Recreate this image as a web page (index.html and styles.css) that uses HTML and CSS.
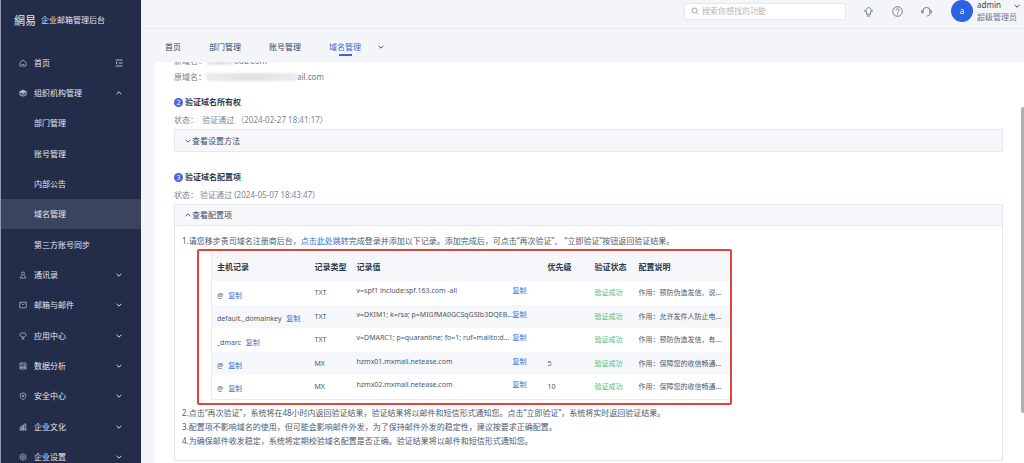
FILE: index.html
```html
<!DOCTYPE html>
<html lang="zh-CN">
<head>
<meta charset="utf-8">
<title>企业邮箱管理后台</title>
<link rel="stylesheet" href="styles.css">
</head>
<body>
<svg class="defs" aria-hidden="true">
  <symbol id="down" viewBox="0 0 10 10"><path d="M2 3.5 5 6.5 8 3.5"/></symbol>
  <symbol id="up" viewBox="0 0 10 10"><path d="M2 6.5 5 3.5 8 6.5"/></symbol>
</svg>
<div class="app">
  <aside class="sidebar">
    <div class="brand"><span class="logo">網易</span><span>企业邮箱管理后台</span></div>
    <nav class="nav">
      <div class="item"><svg class="icon" viewBox="0 0 16 16"><path d="M2 7 8 2l6 5v7H2zM5.500 11h5"/></svg><a href="#">首页</a><button class="fold" aria-label="收起菜单"><svg class="icon wide" viewBox="0 0 16 16"><path d="M1 2h14M7 8h8M1 14h14M4.500 5.500 2 8l2.500 2.500"/></svg></button></div>
      <button class="item"><svg class="icon" viewBox="0 0 16 16"><path d="M8 2l7 3.500-7 3.500-7-3.500z" class="fill"/><path d="M1.500 6v5c0 4 13 4 13 0V6M1.500 9c1 4 12 4 13 0"/></svg><span>组织机构管理</span><svg class="caret"><use href="#up"/></svg></button>
      <a class="item sub" href="#">部门管理</a>
      <a class="item sub" href="#">账号管理</a>
      <a class="item sub" href="#">内部公告</a>
      <a class="item sub active" href="#">域名管理</a>
      <a class="item sub" href="#">第三方账号同步</a>
      <button class="item"><svg class="icon" viewBox="0 0 16 16"><circle cx="8" cy="5" r="3"/><path d="M5.500 8.500 2 14h12l-3.500-5.500"/></svg><span>通讯录</span><svg class="caret"><use href="#down"/></svg></button>
      <button class="item"><svg class="icon" viewBox="0 0 16 16"><path d="M1.500 2.500h13v11h-13zM5 5.500c1.500 2 4.500 2 6 0"/></svg><span>邮箱与邮件</span><svg class="caret"><use href="#down"/></svg></button>
      <button class="item"><svg class="icon" viewBox="0 0 16 16"><path d="M4 2h8l2.500 3.500L11 10H5L1.500 5.500zM8 10v4M5 14h6"/></svg><span>应用中心</span><svg class="caret"><use href="#down"/></svg></button>
      <button class="item"><svg class="icon" viewBox="0 0 16 16"><path d="M2 2h12v12H2zM5 11V8M8 11V6M11 11V5M4 4.500h4M2 11.500h12"/></svg><span>数据分析</span><svg class="caret"><use href="#down"/></svg></button>
      <button class="item"><svg class="icon" viewBox="0 0 16 16"><path d="M8 1.500 13.500 4v5c0 3-3 5-5.500 6-2.500-1-5.500-3-5.500-6V4z"/><circle cx="8" cy="8" r="2"/></svg><span>安全中心</span><svg class="caret"><use href="#down"/></svg></button>
      <button class="item"><svg class="icon" viewBox="0 0 16 16"><path d="M1 14h14M2.500 14V8H6v6M6 14V5h3v9M10 14V2h3.500v12"/></svg><span>企业文化</span><svg class="caret"><use href="#down"/></svg></button>
      <button class="item"><svg class="icon" viewBox="0 0 16 16"><path d="M8 1.500 13.500 4.500v7L8 14.500l-5.500-3v-7z"/><circle cx="8" cy="8" r="2.500"/></svg><span>企业设置</span><svg class="caret"><use href="#down"/></svg></button>
    </nav>
  </aside>
  <div class="main">
    <header class="top">
      <label class="search"><svg class="icon" viewBox="0 0 16 16"><circle cx="7" cy="7" r="5"/><path d="m11 11 4 4"/></svg><input type="search" aria-label="搜索" placeholder="搜索你想找的功能"></label>
      <div class="tools">
        <button class="tool" aria-label="升级"><svg viewBox="0 0 16 16"><path d="M8 1.500 14 7.500h-3V12H5V7.500H2zM5.500 14.500h5"/></svg></button>
        <button class="tool" aria-label="帮助"><svg viewBox="0 0 16 16"><circle cx="8" cy="8" r="7"/><path d="M5.800 6.300c0-3 4.400-2.800 4.400 0C10.200 8 8 8 8 9.800M8 11v1.500"/></svg></button>
        <button class="tool" aria-label="客服"><svg viewBox="0 0 16 16"><path d="M3 10.500V7a5 5 0 0 1 10 0v4c0 2-2 3.500-4.500 3.500M3 6.500H1V10h2M13 6.500h2V10h-2"/></svg></button>
      </div>
      <div class="user">
        <span class="avatar">a</span>
        <div class="who"><span class="name">admin</span><span class="role">超级管理员</span></div>
        <svg class="caret"><use href="#down"/></svg>
      </div>
    </header>
    <nav class="tabs">
      <a href="#">首页</a><a href="#">部门管理</a><a href="#">账号管理</a><a class="current" href="#">域名管理</a>
      <button class="more" aria-label="更多"><svg class="caret"><use href="#down"/></svg></button>
    </nav>
    <main class="panel">
      <div class="content">
        <p class="domain">新域名：<span class="masked short"></span>oud.com</p>
        <p class="domain">原域名：<span class="masked"></span>ail.com</p>

        <section class="step">
          <h2><span class="num">2</span>验证域名所有权</h2>
          <p class="state">状态：&nbsp; 验证通过 （2024-02-27 18:41:17）</p>
          <div class="box"><button class="toggle"><svg class="caret"><use href="#down"/></svg>查看设置方法</button></div>
        </section>

        <section class="step">
          <h2><span class="num">3</span>验证域名配置项</h2>
          <p class="state">状态： 验证通过 (2024-05-07 18:43:47)</p>
          <div class="box">
            <button class="toggle open"><svg class="caret"><use href="#up"/></svg>查看配置项</button>
            <div class="body">
              <p>1.请您移步贵司域名注册商后台，<a href="#">点击此处跳转</a>完成登录并添加以下记录。添加完成后，可点击“再次验证”、 “立即验证”按钮返回验证结果。</p>
              <div class="frame">
                <table>
                  <colgroup><col class="c1"><col class="c2"><col class="c3"><col class="c4"><col class="c5"><col class="c6"><col></colgroup>
                  <thead><tr><th>主机记录</th><th>记录类型</th><th>记录值</th><th></th><th>优先级</th><th>验证状态</th><th>配置说明</th></tr></thead>
                  <tbody>
                    <tr><td class="host">@ <button>复制</button></td><td>TXT</td><td class="value">v=spf1 include:spf.163.com -all</td><td class="value"><button>复制</button></td><td></td><td class="ok">验证成功</td><td>作用：预防伪造发信。说...</td></tr>
                    <tr><td class="host">default._domainkey <button>复制</button></td><td>TXT</td><td class="value">v=DKIM1; k=rsa; p=MIGfMA0GCSqGSIb3DQEB...</td><td class="value"><button>复制</button></td><td></td><td class="ok">验证成功</td><td>作用：允许发件人防止电...</td></tr>
                    <tr><td class="host">_dmarc <button>复制</button></td><td>TXT</td><td class="value">v=DMARC1; p=quarantine; fo=1; ruf=mailto:d...</td><td class="value"><button>复制</button></td><td></td><td class="ok">验证成功</td><td>作用：预防伪造发信，有...</td></tr>
                    <tr><td class="host">@ <button>复制</button></td><td>MX</td><td class="value">hzmx01.mxmail.netease.com</td><td class="value"><button>复制</button></td><td>5</td><td class="ok">验证成功</td><td>作用：保障您的收信畅通...</td></tr>
                    <tr><td class="host">@ <button>复制</button></td><td>MX</td><td class="value">hzmx02.mxmail.netease.com</td><td class="value"><button>复制</button></td><td>10</td><td class="ok">验证成功</td><td>作用：保障您的收信畅通...</td></tr>
                  </tbody>
                </table>
              </div>
              <p>2.点击“再次验证”，系统将在48小时内返回验证结果，验证结果将以邮件和短信形式通知您。点击“立即验证”，系统将实时返回验证结果。</p>
              <p>3.配置项不影响域名的使用，但可能会影响邮件外发，为了保持邮件外发的稳定性，建议按要求正确配置。</p>
              <p>4.为确保邮件收发稳定，系统将定期校验域名配置是否正确。验证结果将以邮件和短信形式通知您。</p>
            </div>
          </div>
        </section>
      </div>
      <div class="scrollbar"></div>
    </main>
  </div>
</div>
</body>
</html>
```

FILE: styles.css
```css
* { box-sizing: border-box; }
body {
  margin: 0;
  font: 8px/14px "Noto Sans", "Noto Sans CJK SC", sans-serif;
  color: #50596a;
  background: #f4f5f8;
}
p, h2 { margin: 0; }
a { color: inherit; text-decoration: none; }
button {
  font: inherit;
  color: inherit;
  background: none;
  border: 0;
  padding: 0;
}
svg { fill: none; stroke: currentColor; }
.defs { display: none; }
.icon { width: 8px; height: 8px; stroke-width: 1.5; flex: none; }
.wide { stroke-width: 2; }
.fill { fill: currentColor; }
.caret { width: 8px; height: 8px; stroke-width: 1.2; flex: none; }

.app { display: flex; height: 100vh; overflow: hidden; }

.sidebar {
  flex: none;
  width: 141px;
  border-left: 1px solid #9299ab;
  background: #232c48;
  color: #e3e6ee;
  overflow: hidden;
}
.brand {
  display: flex;
  align-items: center;
  gap: 5px;
  height: 40px;
  margin-bottom: 8px;
  padding-left: 13px;
}
.logo { font: 11px/14px "Noto Sans CJK TC", sans-serif; }
.item {
  display: flex;
  align-items: center;
  gap: 7px;
  width: 100%;
  height: 30px;
  padding: 0 18px;
  text-align: left;
}
.item:nth-child(3n) { margin-bottom: 1px; }
.item .icon { color: #b4bacb; }
.item .caret, .fold { margin-left: auto; }
.fold { display: flex; }
.sub { padding-left: 33px; }
.active { background: #3a445d; }

.main { flex: 1; min-width: 0; display: flex; flex-direction: column; }
.top {
  display: flex;
  align-items: center;
  justify-content: flex-end;
  height: 29px;
  padding: 0 3px 6px 0;
  border-bottom: 1px solid #e9ebef;
}
.search {
  display: flex;
  align-items: center;
  gap: 3px;
  width: 162px;
  height: 17px;
  padding: 0 6px;
  background: #fff;
  border: 1px solid #e4e7ec;
  border-radius: 2px;
  color: #7d8594;
}
.search input {
  flex: 1;
  min-width: 0;
  border: 0;
  padding: 0;
  outline: 0;
  font: inherit;
  background: none;
}
.search input::placeholder { color: #b0b5be; }
.tools { display: flex; gap: 18px; margin: 0 19px 0 17px; color: #636e82; }
.tool { display: flex; }
.tool svg { width: 11px; height: 11px; stroke-width: 1.3; }
.user { display: flex; align-items: center; gap: 4px; }
.avatar {
  width: 22px;
  height: 22px;
  border-radius: 50%;
  background: #2d62e2;
  color: #fff;
  line-height: 22px;
  text-align: center;
}
.who { display: flex; flex-direction: column; line-height: 12px; }
.name { color: #39445a; }
.role { color: #6d7789; }
.user .caret { align-self: flex-start; margin-top: 3px; margin-left: -8px; color: #39445a; }

.tabs {
  display: flex;
  align-items: center;
  gap: 28px;
  height: 33px;
  padding: 3px 24px 0;
  color: #39445a;
}
.current {
  color: #3a67cf;
  background: linear-gradient(#3a67cf, #3a67cf) center bottom / 13px 2px no-repeat;
  padding: 2px 0;
}
.more { display: flex; margin-left: -12px; }

.panel {
  flex: 1;
  min-height: 0;
  display: flex;
  margin-left: 14px;
  background: #fff;
  overflow: hidden;
}
.content { flex: 1; min-width: 0; margin-top: -9px; padding-left: 19px; }
.domain { display: flex; align-items: center; height: 16px; color: #747b88; }
.masked {
  width: 91px;
  height: 8px;
  background: linear-gradient(90deg, #ececee, #e0e0e3, #ececee);
  filter: blur(1px);
}
.short { width: 28px; }
.step { padding-top: 9px; margin-bottom: 8px; }
.step h2 {
  display: flex;
  align-items: center;
  gap: 2px;
  height: 16px;
  margin-bottom: 2px;
  font-size: 8px;
  color: #303a4c;
}
.num {
  width: 9px;
  height: 9px;
  border-radius: 50%;
  background: #4766e0;
  color: #fff;
  font-size: 7px;
  font-weight: 400;
  line-height: 9px;
  text-align: center;
}
.state { height: 16px; line-height: 16px; color: #7e8592; margin-bottom: 1px; }
.box { border: 1px solid #e5e8ee; }
.toggle {
  display: flex;
  align-items: center;
  width: 100%;
  height: 21px;
  padding-left: 9px;
  background: #f5f7fa;
  color: #434c5d;
}
.open { border-bottom: 1px solid #e5e8ee; }
.body { padding: 8px 7px 12px; }
.body p a, td button { color: #3b6bd6; }
.frame {
  width: 535px;
  margin: 1px 0 1px 15px;
  padding: 1px 0 3px 12px;
  border: 2px solid #df4540;
  border-radius: 2px;
}
table {
  width: 100%;
  table-layout: fixed;
  border-collapse: collapse;
  border-left: 1px solid #e9ecf1;
  border-bottom: 1px solid #e9ecf1;
  font-size: 7px;
  line-height: 12px;
  white-space: nowrap;
}
th, td { padding: 0 0 0 5px; text-align: left; }
th { height: 29px; font-size: 8px; color: #303a4c; }
td { height: 24px; }
tbody tr:nth-child(even) td { height: 23px; }
thead, tbody tr:nth-child(even) { background: #f5f7fa; }
.host { padding-top: 5px; }
.host button { margin-left: 3px; }
.value { padding-bottom: 4px; }
td.ok { color: #4dbd85; }
.c1 { width: 98px; }
.c2 { width: 42px; }
.c3 { width: 156px; }
.c4 { width: 35px; }
.c5 { width: 47px; }
.c6 { width: 44px; }
.scrollbar {
  flex: none;
  width: 3px;
  height: 306px;
  margin: 45px 0 0 18px;
  border-radius: 2px 0 0 2px;
  background: #b0b0b0;
}
```
